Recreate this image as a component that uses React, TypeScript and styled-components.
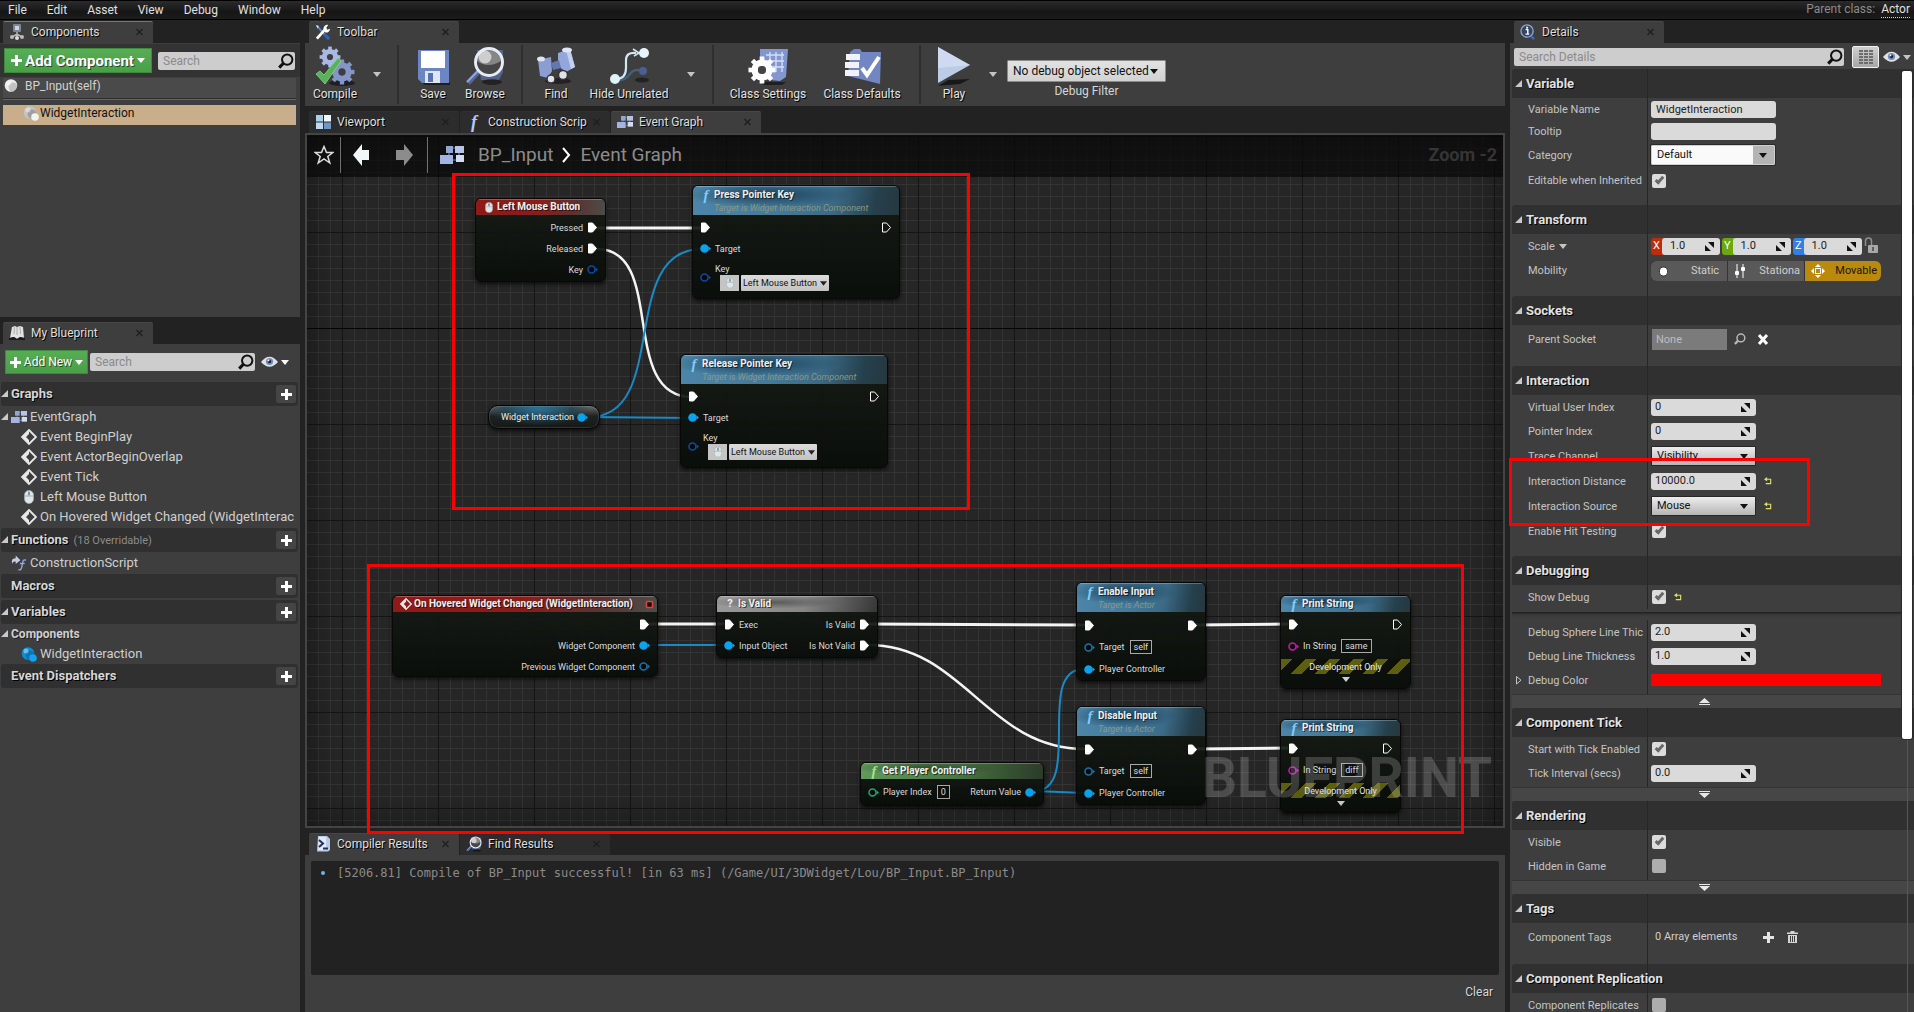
import React from "react";
import styled, { createGlobalStyle, css } from "styled-components";

const sans = `Roboto, "Liberation Sans", sans-serif`;
const mono = `"DejaVu Sans Mono", "Liberation Mono", monospace`;

const Global = createGlobalStyle`
  *, *::before, *::after { box-sizing: border-box; }
  html, body { margin: 0; height: 100%; background: #222; }
  body { font: 12px/16px ${sans}; color: #d6d6d6; overflow: hidden; }
  button, input, select { font: inherit; color: inherit; margin: 0; }
  button { padding: 0; border: 0; background: none; cursor: pointer; }
  svg { display: block; flex: none; }
`;

/* ---------- shell ---------- */

const Editor = styled.div`
  position: relative;
  display: flex;
  flex-direction: column;
  height: 100vh;
  min-height: 600px;
  overflow: hidden;
`;

const MenuBar = styled.header`
  flex: none;
  display: flex;
  align-items: center;
  justify-content: space-between;
  height: 20px;
  padding: 0 4px 0 8px;
  background: linear-gradient(#2b2b2b, #161616 60%, #1c1c1c);
  border-top: 1px solid #000;
  border-bottom: 1px solid #000;
`;

const MenuItems = styled.nav`
  display: flex;
  gap: 20px;
  color: #e0e0e0;
`;

const ParentClass = styled.div`
  display: flex;
  gap: 6px;
  color: #8c8c8c;
  line-height: 15px;

  a {
    color: #e0e0e0;
    text-decoration: none;
    border-bottom: 1px dotted #cfcfcf;
  }
`;

const Workspace = styled.main`
  flex: 1;
  min-height: 0;
  display: grid;
  grid-template-columns: 300px minmax(0, 1fr) 404px;
  column-gap: 5px;
  padding-top: 1px;
`;

const Column = styled.div`
  display: flex;
  flex-direction: column;
  min-width: 0;
  min-height: 0;
`;

const Dock = styled.section<{ $height?: number }>`
  display: flex;
  flex-direction: column;
  min-height: 0;
  ${(p) => (p.$height ? `flex: none; height: ${p.$height}px;` : "flex: 1;")}
`;

const TabStrip = styled.div<{ $inset: number }>`
  flex: none;
  display: flex;
  gap: 1px;
  height: 22px;
  padding-left: ${(p) => p.$inset}px;
`;

const Tab = styled.div<{ $active?: boolean; $accent?: boolean }>`
  display: flex;
  align-items: center;
  gap: 6px;
  width: 150px;
  padding: 0 10px 2px 6px;
  background: ${(p) => (p.$active ? "#3e3e3e" : "#2c2c2c")};
  border-top: 1px solid ${(p) => (p.$accent ? "#8a7a2c" : p.$active ? "#474747" : "#303030")};
  border-radius: 2px 2px 0 0;
  color: #dedede;
  text-shadow: 1px 1px 0 #000;
  white-space: nowrap;
`;

const TabIcon = styled.span`
  display: grid;
  place-items: center;
  width: 16px;
`;

const TabTitle = styled.span`
  flex: 1;
`;

const CloseButton = styled.button`
  width: 7px;
  height: 12px;
  color: #1d1d1d;
`;

const PanelBody = styled.div`
  flex: 1;
  min-height: 0;
  display: flex;
  flex-direction: column;
  background: #3e3e3e;
`;

/* ---------- shared controls ---------- */

const SearchWrap = styled.label`
  flex: 1;
  min-width: 0;
  display: flex;
  align-items: center;
  height: 18px;
  padding: 0 1px 0 5px;
  background: #cdcdcd;
  border-radius: 2px;

  input {
    flex: 1;
    min-width: 0;
    padding: 0;
    border: 0;
    outline: 0;
    background: transparent;
    color: #222;
  }
  input::placeholder { color: #8b8b8b; opacity: 1; }
`;

const GreenButton = styled.button<{ $large?: boolean }>`
  flex: none;
  display: flex;
  align-items: center;
  justify-content: center;
  gap: 3px;
  width: ${(p) => (p.$large ? 148 : 83)}px;
  height: ${(p) => (p.$large ? 25 : 24)}px;
  background: linear-gradient(#56ad53, #4aa049);
  border: 1px solid #3d8a3c;
  color: #fff;
  font-size: ${(p) => (p.$large ? 15 : 12)}px;
  font-weight: ${(p) => (p.$large ? 700 : 400)};
  text-shadow: 1px 1px 0 #2a4a2a;
  white-space: nowrap;
`;

const IconButton = styled.button`
  flex: none;
  display: flex;
  align-items: center;
  gap: 3px;
`;

/* ---------- icons ---------- */

const Caret = ({ w = 8, c = "#fff" }: { w?: number; c?: string }) => (
  <svg width={w} height={5} viewBox="0 0 8 5"><path d="M0 0h8L4 5z" fill={c} /></svg>
);

const Cross = () => (
  <svg width="7" height="12" viewBox="0 0 7 12"><path d="M.5 3l6 6M6.5 3l-6 6" stroke="currentColor" strokeWidth="1.2" /></svg>
);

const PlusIcon = ({ s = 11, c = "#fff" }: { s?: number; c?: string }) => (
  <svg width={s} height={s} viewBox="0 0 11 11"><path d="M4 0h3v4h4v3H7v4H4V7H0V4h4z" fill={c} /></svg>
);

const SearchIcon = ({ c = "#111", s = 16 }: { c?: string; s?: number }) => (
  <svg width={s} height={s} viewBox="0 0 16 16">
    <circle cx="9.2" cy="6.6" r="5.2" fill="none" stroke={c} strokeWidth="2" />
    <path d="M5.4 10.2L1.2 14.6" stroke={c} strokeWidth="3" />
  </svg>
);

const EyeIcon = () => (
  <svg width="17" height="12" viewBox="0 0 17 12">
    <path d="M0 6Q8.500-4.500 17 6Q8.500 15.500 0 6z" fill="#dfe3e8" />
    <circle cx="8.500" cy="5.500" r="3.600" fill="#6f8db8" />
    <circle cx="8.500" cy="5.500" r="1.700" fill="#1a2233" />
    <circle cx="7.500" cy="4.400" r=".9" fill="#fff" />
  </svg>
);

const GraphIcon = ({ s = 16 }: { s?: number }) => (
  <svg width={s} height={s} viewBox="0 0 24 24">
    <path d="M12 5h5M9 9v4M12 17h5M19 9v5" stroke="#7582a8" strokeWidth="1.200" fill="none" />
    <rect x="6" y="3" width="7" height="7" fill="#93a4d6" />
    <rect x="15" y="3" width="9" height="7" fill="#b7c4e8" />
    <rect x="0" y="12" width="13" height="9" fill="#a3b4e2" />
    <rect x="16" y="12" width="8" height="7" fill="#d5dcf2" />
  </svg>
);

const EventIcon = ({ s = 16, c = "#e8e8e8" }: { s?: number; c?: string }) => (
  <svg width={s} height={s} viewBox="0 0 16 16">
    <path d="M8 1L15 8L8 15L1 8z" fill="none" stroke={c} strokeWidth="1.800" />
    <path d="M8 1L1 8L8 15V11L5 8L8 5z" fill={c} />
  </svg>
);

const MouseIcon = ({ w = 10, h = 14 }: { w?: number; h?: number }) => (
  <svg width={w} height={h} viewBox="0 0 10 14">
    <rect x=".5" y=".5" width="9" height="13" rx="4.500" fill="#dde6e8" stroke="#9fb0b4" strokeWidth=".7" />
    <path d="M.5 6h9M5 .5V6" stroke="#8c9a9e" strokeWidth=".7" />
    <rect x="4" y="2" width="2" height="3" rx="1" fill="#7c8b90" />
  </svg>
);

const SphereIcon = ({ c = "#ededed", dot = false }: { c?: string; dot?: boolean }) => (
  <svg width="16" height="16" viewBox="0 0 16 16">
    <circle cx="7" cy="7.500" r="6.300" fill={c} />
    <circle cx="9" cy="9" r="4.500" fill="#000" opacity=".18" />
    <circle cx="5" cy="5" r="2.500" fill="#fff" opacity=".4" />
    {dot && <circle cx="12" cy="12" r="3.800" fill={c === "#0b8fdb" ? "#14a2f0" : "#f4f4f4"} />}
  </svg>
);

const Twisty = styled.span`
  flex: none;
  width: 0;
  height: 0;
  border-left: 7px solid transparent;
  border-bottom: 7px solid #c9c9c9;
`;

const FGlyph = styled.span<{ $size: number; $color: string }>`
  font: italic 700 ${(p) => p.$size}px/14px "Liberation Serif", serif;
  color: ${(p) => p.$color};
  text-shadow: none;
`;

const ComponentsIcon = () => (
  <svg width="16" height="16" viewBox="0 0 16 16">
    <rect x="4" y="0" width="8" height="8" rx="1" fill="#7c8796" /><rect x="6" y="2" width="4" height="4" fill="#c9d5e6" />
    <path d="M8 8v4M3 13l5-3 5 3" stroke="#b5b5b5" fill="none" strokeWidth="1.500" />
    <circle cx="3" cy="13" r="2" fill="#bbb" /><circle cx="8" cy="14" r="2" fill="#ddd" /><circle cx="13" cy="13" r="2" fill="#bbb" />
  </svg>
);

const BookIcon = () => (
  <svg width="16" height="16" viewBox="0 0 16 16">
    <path d="M3 2l3-1 2 1 3-1 3 1 1 11-4-1-3 2-3-2-4 1z" fill="#e2e2e2" />
    <path d="M8 2v8M5.500 2L5 9M11 2l.5 7" stroke="#9d9d9d" strokeWidth=".8" />
    <path d="M0 13l5-1 3 2 3-2 5 1v2H0z" fill="#1b1b1b" />
  </svg>
);

const WrenchIcon = () => (
  <svg width="16" height="16" viewBox="0 0 17 17">
    <path d="M2 2l9 10" stroke="#5d83c4" strokeWidth="2" /><path d="M10 11l5 5" stroke="#2f62b8" strokeWidth="3.500" />
    <path d="M2 15.500L10.500 6" stroke="#fff" strokeWidth="3" />
    <path d="M9 5a4 4 0 015-4l-2 3 1 2 3-1a4 4 0 01-5 4z" fill="#fff" />
    <path d="M1 1l3 1-1 3z" fill="#dfe6f3" />
  </svg>
);

const ViewportIcon = () => (
  <svg width="15" height="16" viewBox="0 0 15 16">
    <rect x="0" y="1" width="7" height="6.500" fill="#a7d0ea" /><rect x="8" y="1" width="7" height="6.500" fill="#f3f7fb" />
    <rect x="0" y="8.500" width="7" height="6.500" fill="#c3d7f0" /><rect x="8" y="8.500" width="7" height="6.500" fill="#6f96c4" />
  </svg>
);

const InfoIcon = () => (
  <svg width="16" height="16" viewBox="0 0 17 17">
    <path d="M10 11l5 5" stroke="#3e68b4" strokeWidth="2.500" />
    <circle cx="7.500" cy="7.500" r="6.500" fill="#35445f" stroke="#8ba6d6" strokeWidth="1.400" />
    <path d="M6 6h2.300v4.500M5.800 10.800h4" stroke="#fff" strokeWidth="1.500" fill="none" /><rect x="6.600" y="2.900" width="2" height="2" fill="#fff" />
  </svg>
);

const ScriptIcon = () => (
  <svg width="14" height="16" viewBox="0 0 14 16">
    <path d="M2 0h9l3 3v11l-2 1.500H1z" fill="#b9cbe8" /><path d="M3 1h7v13H2z" fill="#e0eaf8" />
    <path d="M3 4l4 3.500L3 11M7 12.500h5" stroke="#25304f" strokeWidth="2" fill="none" />
  </svg>
);

const LensIcon = ({ s = 16 }: { s?: number }) => (
  <svg width={s} height={s} viewBox="0 0 40 40">
    <path d="M12 4h26v22l-4 8H16z" fill="#5c74ae" opacity=".7" />
    <ellipse cx="27" cy="36" rx="10" ry="3" fill="#000" opacity=".45" />
    <path d="M14 25L3 37" stroke="#54689c" strokeWidth="5" /><path d="M13 25L2 36" stroke="#93a8d8" strokeWidth="2" />
    <circle cx="24" cy="16" r="13.500" fill="#858585" stroke="#e6ebf5" strokeWidth="3" />
    <path d="M12 15q11 8 24 0a12 12 0 01-24 2z" fill="#1c1c1c" opacity=".6" />
    <circle cx="20" cy="11" r="6.500" fill="#fff" opacity=".6" />
  </svg>
);

const Gear = ({ cx, cy, r, c }: { cx: number; cy: number; r: number; c: string }) => (
  <g transform={`translate(${cx} ${cy})`}>
    <circle r={r * 0.56} fill="none" stroke={c} strokeWidth={r * 0.5} />
    {[0, 45, 90, 135, 180, 225, 270, 315].map((a) => (
      <rect key={a} x={-r * 0.18} y={-r * 1.04} width={r * 0.36} height={r * 0.4} fill={c} transform={`rotate(${a})`} />
    ))}
  </g>
);

const CompileIcon = () => (
  <svg width="40" height="40" viewBox="0 0 40 40">
    <ellipse cx="27" cy="37" rx="13" ry="3" fill="#000" opacity=".5" />
    <Gear cx={15} cy={11} r={10} c="#a9b9e4" /><Gear cx={27} cy={26} r={12} c="#8496c8" />
    <path d="M1 28l4-3 4 4L23 12l3 3L10 38z" fill="#57b25a" stroke="#8fd48c" strokeWidth=".8" />
  </svg>
);

const SaveIcon = () => (
  <svg width="40" height="40" viewBox="0 0 40 40">
    <path d="M8 36h29v3H12z" fill="#000" opacity=".5" />
    <path d="M5 4h31v33H9l-4-4z" fill="#6c86c4" /><rect x="8" y="5" width="24" height="17" fill="#fff" />
    <rect x="12" y="25" width="15" height="12" fill="#dfe5f2" /><rect x="15" y="27" width="5" height="9" fill="#5871b0" />
  </svg>
);

const FindIcon = () => (
  <svg width="40" height="40" viewBox="0 0 40 40">
    <ellipse cx="22" cy="35" rx="13" ry="3" fill="#000" opacity=".45" />
    <path d="M2 14l13-3 1 14-4 7-8-2z" fill="#8a9ed4" /><path d="M22 7l12-4 5 18-9 5-8-6z" fill="#93a7dc" />
    <path d="M30 4l4-1 5 18-4 2z" fill="#c4d0ee" /><path d="M15 17l8-3 2 8-8 2z" fill="#6478b0" />
    <ellipse cx="5" cy="13" rx="4" ry="2.500" fill="#dfe5f4" /><ellipse cx="31" cy="4" rx="5" ry="2.500" fill="#dfe5f4" />
    <circle cx="15" cy="33" r="4" fill="#dfe3e8" stroke="#333" strokeWidth="1.500" /><circle cx="27" cy="29" r="4.500" fill="#dfe3e8" stroke="#333" strokeWidth="1.500" />
  </svg>
);

const HideIcon = () => (
  <svg width="42" height="40" viewBox="0 0 42 40">
    <path d="M10 34Q18 34 22 28T35 25" stroke="#3f6078" strokeWidth="2.500" fill="none" /><circle cx="35" cy="25" r="4" fill="#4b5f94" />
    <path d="M8 33Q18 33 18 22V14Q18 6 28 7" stroke="#cfe7f2" strokeWidth="2.200" fill="none" /><path d="M25 3l6 4-5 3" stroke="#cfe7f2" strokeWidth="1.600" fill="none" />
    <ellipse cx="34" cy="34" rx="7" ry="2.500" fill="#111" opacity=".6" />
    <circle cx="7" cy="33" r="5" fill="#dff3fb" /><circle cx="36" cy="7" r="5" fill="#e8f4fb" />
  </svg>
);

const SettingsIcon = () => (
  <svg width="40" height="40" viewBox="0 0 40 40">
    <path d="M12 36h26l-4 3H16z" fill="#000" opacity=".5" />
    <path d="M12 3h28l-2 28-6 4-20-2z" fill="#8296cf" />
    <path d="M18 9h18M18 15h18M18 21h18M22 6v20M28 6v20M34 6v20" stroke="#d7dff4" strokeWidth="1.300" />
    <Gear cx={14} cy={24} r={13} c="#fff" /><circle cx="14" cy="24" r="4" fill="#444" />
  </svg>
);

const DefaultsIcon = () => (
  <svg width="40" height="40" viewBox="0 0 40 40">
    <path d="M8 6l4-3h6l2 3h19l-1 32-32-8z" fill="#7186c2" />
    <path d="M4 8h14v6H4zM3 16h14v6H3zM3 24h14v6H3z" fill="#f1f3f8" />
    <path d="M20 22l5 7L37 11" stroke="#fff" strokeWidth="4" fill="none" />
  </svg>
);

const PlayIcon = () => (
  <svg width="36" height="40" viewBox="0 0 36 40">
    <path d="M2 40l10-6 22-1-10 5z" fill="#000" opacity=".6" /><path d="M2 1l32 18L2 37z" fill="#bccbe6" /><path d="M2 1l32 18-32 3z" fill="#dbe5f5" opacity=".6" />
  </svg>
);

const StarIcon = () => (
  <svg width="20" height="20" viewBox="0 0 20 20"><path d="M10 1.500l2.500 6h6.300l-5 4 2 6.500L10 14l-5.800 4 2-6.500-5-4h6.300z" fill="none" stroke="#dcdcdc" strokeWidth="1.500" /></svg>
);

const ArrowIcon = ({ dir, c }: { dir: "l" | "r"; c: string }) => (
  <svg width="17" height="22" viewBox="0 0 17 22">
    <path d={dir === "l" ? "M0 11L9 0v6h7v10H9v6z" : "M17 11L8 0v6H0v10h8v6z"} fill={c} />
  </svg>
);

const SpinGlyph = () => (
  <svg width="9" height="9" viewBox="0 0 9 9"><path d="M3 0h6v6zM0 3v6h6z" fill="#111" /></svg>
);

const ResetGlyph = () => (
  <svg width="8" height="8" viewBox="0 0 9 9"><path d="M1 2.500h6.500v5H2" stroke="#dede6a" strokeWidth="1.300" fill="none" /><path d="M0 2.500L3.500 0v5z" fill="#dede6a" /></svg>
);

const LockIcon = () => (
  <svg width="14" height="18" viewBox="0 0 14 18">
    <path d="M1.500 9V4a3 3 0 016 0v5" stroke="#8f8f8f" strokeWidth="1.500" fill="none" /><rect x="4" y="8" width="10" height="8" rx="1" fill="#a8a8a8" /><path d="M9 10v4" stroke="#444" strokeWidth="1.500" />
  </svg>
);

const GridIcon = () => (
  <svg width="14" height="16" viewBox="0 0 14 16">
    {[0, 3, 6, 9, 12].map((y) => [0, 5, 10].map((x) => <rect key={`${x}-${y}`} x={x} y={y + 1} width="4" height="2" fill="#6d6d6d" />))}
  </svg>
);

const TrashIcon = () => (
  <svg width="11" height="12" viewBox="0 0 11 12"><path d="M0 1.500h3.500V0h4v1.500H11V3H0z" fill="#d5d5d5" /><path d="M1 4h9v8H1z" fill="#d5d5d5" /><path d="M3.500 5v6M5.500 5v6M7.500 5v6" stroke="#3e3e3e" /></svg>
);

const Chevron = () => (
  <svg width="9" height="16" viewBox="0 0 9 16"><path d="M1 1l6 7-6 7" stroke="#fff" strokeWidth="2" fill="none" /></svg>
);

/* ---------- left column ---------- */

const ComponentsHead = styled.div`
  display: flex;
  align-items: center;
  gap: 6px;
  height: 33px;
  padding: 0 5px 0 4px;
  margin-top: 1px;
  background: #333;
`;

const ComponentList = styled.div`
  display: flex;
  flex-direction: column;
  padding: 1px 4px 0 3px;
`;

const ComponentRow = styled.button<{ $selected?: boolean }>`
  display: flex;
  align-items: center;
  gap: ${(p) => (p.$selected ? 1 : 5)}px;
  height: 20px;
  padding: 0 0 4px ${(p) => (p.$selected ? 20 : 1)}px;
  background: ${(p) => (p.$selected ? "#c9ae8b" : "#4a4a4a")};
  color: ${(p) => (p.$selected ? "#111" : "#d2d2d2")};
`;

const ListRule = styled.hr`
  width: 100%;
  height: 7px;
  margin: 0;
  border: 0;
  border-top: 1px solid #2c2c2c;
  background: linear-gradient(#666, #666) top / 100% 1px no-repeat;
`;

const BlueprintStrip = styled(TabStrip)`
  margin-top: 5px;
`;

const BlueprintHead = styled.div`
  display: flex;
  align-items: center;
  gap: 2px;
  padding: 6px 11px 8px 5px;

  ${IconButton} { margin-left: 4px; }
`;

const TreeHeader = styled.div`
  display: flex;
  align-items: center;
  gap: 3px;
  height: 24px;
  margin: 0 2px 0 1px;
  padding: 0 2px 0 0;
  background: #303030;
  border-radius: 3px;
  font-size: 13px;
  font-weight: 700;
  text-shadow: 1px 1px 0 #000;

  small { flex: 1; margin-left: 2px; padding-top: 2px; font-size: 11px; font-weight: 400; color: #8c8c8c; text-shadow: none; }
`;

const TwistySlot = styled.span`
  flex: none;
  display: flex;
  width: 7px;
  padding-bottom: 2px;
`;

const AddButton = styled.button`
  display: grid;
  place-items: center;
  width: 20px;
  height: 18px;
  border-radius: 2px;
  background: #454545;
`;

const TreeGroup = styled.div`
  padding: 1px 0;
`;

const TreeRow = styled.div<{ $indent?: number }>`
  display: flex;
  align-items: center;
  gap: 3px;
  height: 20px;
  padding-left: ${(p) => p.$indent ?? 1}px;
  color: #cfcfcf;
  font-size: 13px;
  white-space: nowrap;
`;

const IconSlot = styled.span`
  display: grid;
  place-items: center;
  width: 16px;
`;

const SubHead = styled.b`
  text-shadow: 1px 1px 0 #222;
  font-size: 12px;
`;

const TreeGap = styled.div`
  height: 2px;
`;

const TreeHead = ({ title, note, open = true }: { title: string; note?: string; open?: boolean }) => (
  <TreeHeader>
    <TwistySlot>{open && <Twisty />}</TwistySlot>
    <span>{title}</span>
    <small>{note}</small>
    <AddButton aria-label={`Add to ${title}`}><PlusIcon /></AddButton>
  </TreeHeader>
);

const TabItem = ({ icon, title, active, accent }: { icon: React.ReactNode; title: string; active?: boolean; accent?: boolean }) => (
  <Tab $active={active} $accent={accent}>
    <TabIcon>{icon}</TabIcon>
    <TabTitle>{title}</TabTitle>
    <CloseButton aria-label={`Close ${title}`}><Cross /></CloseButton>
  </Tab>
);

const LeftColumn = () => (
  <Column>
    <Dock $height={296}>
      <TabStrip $inset={3}><TabItem icon={<ComponentsIcon />} title="Components" active accent /></TabStrip>
      <PanelBody>
        <ComponentsHead>
          <GreenButton $large><PlusIcon />Add Component<Caret /></GreenButton>
          <SearchWrap><input aria-label="Search components" placeholder="Search" /><SearchIcon /></SearchWrap>
        </ComponentsHead>
        <ComponentList>
          <ComponentRow><SphereIcon />BP_Input(self)</ComponentRow>
          <ListRule />
          <ComponentRow $selected><SphereIcon c="#c4c4c4" dot />WidgetInteraction</ComponentRow>
        </ComponentList>
      </PanelBody>
    </Dock>
    <Dock>
      <BlueprintStrip $inset={3}>
        <TabItem icon={<BookIcon />} title="My Blueprint" active />
      </BlueprintStrip>
      <PanelBody>
        <BlueprintHead>
          <GreenButton><PlusIcon />Add New<Caret /></GreenButton>
          <SearchWrap><input aria-label="Search blueprint" placeholder="Search" /><SearchIcon /></SearchWrap>
          <IconButton aria-label="View options"><EyeIcon /><Caret /></IconButton>
        </BlueprintHead>
        <TreeHead title="Graphs" />
        <TreeGroup>
          <TreeRow><TwistySlot><Twisty /></TwistySlot><IconSlot><GraphIcon /></IconSlot>EventGraph</TreeRow>
          <TreeRow $indent={21}><IconSlot><EventIcon /></IconSlot>Event BeginPlay</TreeRow>
          <TreeRow $indent={21}><IconSlot><EventIcon /></IconSlot>Event ActorBeginOverlap</TreeRow>
          <TreeRow $indent={21}><IconSlot><EventIcon /></IconSlot>Event Tick</TreeRow>
          <TreeRow $indent={21}><IconSlot><MouseIcon /></IconSlot>Left Mouse Button</TreeRow>
          <TreeRow $indent={21}><IconSlot><EventIcon /></IconSlot>On Hovered Widget Changed (WidgetInterac</TreeRow>
        </TreeGroup>
        <TreeHead title="Functions" note="(18 Overridable)" />
        <TreeGroup>
          <TreeRow $indent={11}>
            <IconSlot>
              <svg width="16" height="16" viewBox="0 0 17 16">
                <path d="M1 9V6q0-3 4-3V0l5 5-5 4V6.500Q2 6 1 9z" fill="#c3cce0" />
                <path d="M8 15q3 1 3.500-3l1-5q.5-3 3.500-2M9.500 8.500h5" stroke="#8fa6dc" strokeWidth="1.500" fill="none" />
              </svg>
            </IconSlot>
            ConstructionScript
          </TreeRow>
        </TreeGroup>
        <TreeHead title="Macros" open={false} />
        <TreeGap />
        <TreeHead title="Variables" />
        <TreeRow><TwistySlot><Twisty /></TwistySlot><SubHead>Components</SubHead></TreeRow>
        <TreeRow $indent={21}><IconSlot><SphereIcon c="#0b8fdb" dot /></IconSlot>WidgetInteraction</TreeRow>
        <TreeHead title="Event Dispatchers" open={false} />
      </PanelBody>
    </Dock>
  </Column>
);

/* ---------- toolbar ---------- */

const ToolbarBody = styled.div`
  flex: none;
  display: flex;
  align-items: center;
  height: 63px;
  background: #3e3e3e;
  overflow: hidden;
`;

const Tool = styled.button<{ $w: number }>`
  flex: none;
  display: flex;
  flex-direction: column;
  align-items: center;
  width: ${(p) => p.$w}px;
  padding-bottom: 1px;
  color: #e2e2e2;
  text-shadow: 1px 1px 0 #000;
  white-space: nowrap;
`;

const DropArrow = styled.button<{ $w: number }>`
  flex: none;
  display: grid;
  place-items: center;
  width: ${(p) => p.$w}px;
  height: 40px;
`;

const ToolDivider = styled.div<{ $gap: number }>`
  flex: none;
  width: 2px;
  height: 59px;
  margin: 0 4px 0 ${(p) => p.$gap}px;
  background: #2e2e2e;
`;

const FilterGroup = styled.label`
  display: flex;
  flex-direction: column;
  align-items: center;
  gap: 1px;
  margin-left: 4px;
  padding-top: 10px;
`;

const SelectBox = styled.span<{ $w: number; $h: number; $plain?: boolean }>`
  display: flex;
  position: relative;
  width: ${(p) => p.$w}px;
  height: ${(p) => p.$h}px;
  color: #111;

  select {
    appearance: none;
    width: 100%;
    height: 100%;
    padding: 0 3px 0 5px;
    border: 1px solid ${(p) => (p.$plain ? "#8a8a8a" : "#262626")};
    border-radius: 1px;
    background: linear-gradient(#ededed, #b5b5b5);
    color: inherit;
    ${(p) => p.$plain && css`background: linear-gradient(#e2e2e2, #d2d2d2);`}
  }
  svg { position: absolute; right: 8px; top: calc(50% - 2px); pointer-events: none; }
`;

const Toolbar = () => (
  <>
    <TabStrip $inset={4}><TabItem icon={<WrenchIcon />} title="Toolbar" active /></TabStrip>
    <ToolbarBody>
      <Tool $w={60}><CompileIcon />Compile</Tool>
      <DropArrow $w={24} aria-label="Compile options"><Caret c="#c4c4c4" /></DropArrow>
      <ToolDivider $gap={8} />
      <Tool $w={60}><SaveIcon />Save</Tool>
      <Tool $w={44}><LensIcon s={40} />Browse</Tool>
      <ToolDivider $gap={14} />
      <Tool $w={58}><FindIcon />Find</Tool>
      <Tool $w={88}><HideIcon />Hide Unrelated</Tool>
      <DropArrow $w={36} aria-label="Hide unrelated options"><Caret c="#c4c4c4" /></DropArrow>
      <ToolDivider $gap={3} />
      <Tool $w={100}><SettingsIcon />Class Settings</Tool>
      <Tool $w={88}><DefaultsIcon />Class Defaults</Tool>
      <ToolDivider $gap={13} />
      <Tool $w={58}><PlayIcon />Play</Tool>
      <DropArrow $w={20} aria-label="Play options"><Caret c="#c4c4c4" /></DropArrow>
      <FilterGroup>
        <SelectBox $w={159} $h={22} $plain>
          <select defaultValue="none"><option value="none">No debug object selected</option></select>
          <Caret c="#111" />
        </SelectBox>
        Debug Filter
      </FilterGroup>
    </ToolbarBody>
  </>
);

/* ---------- graph ---------- */

const GraphTabs = styled(TabStrip)`
  margin-top: 5px;
`;

const GraphFrame = styled.div`
  position: relative;
  flex: 1;
  min-height: 0;
  border: 2px solid #444;
  overflow: hidden;
  background-color: #262626;
  background-image:
    linear-gradient(#050505, #050505),
    linear-gradient(90deg, #151515 1px, transparent 1px),
    linear-gradient(#151515 1px, transparent 1px),
    linear-gradient(90deg, #343434 1px, transparent 1px),
    linear-gradient(#343434 1px, transparent 1px);
  background-repeat: no-repeat, repeat, repeat, repeat, repeat;
  background-position: 0 193px, -61px 0, 0 1px, -1px 0, 0 1px;
  background-size: 100% 1px, 96px 96px, 96px 96px, 12px 12px, 12px 12px;

  &::after {
    content: "";
    position: absolute;
    inset: 0;
    pointer-events: none;
    box-shadow: inset 0 0 36px rgba(0, 0, 0, 0.45);
  }
`;

const GraphTitle = styled.div`
  position: absolute;
  z-index: 2;
  inset: 0 0 auto 0;
  display: flex;
  align-items: center;
  height: 42px;
  padding: 0 6px 2px 7px;
  background: rgba(8, 8, 8, 0.72);
  color: #8c8c8c;
  font-size: 19px;
`;

const TitleTools = styled.div<{ $w: number; $pad: string }>`
  display: flex;
  align-items: center;
  justify-content: space-between;
  width: ${(p) => p.$w}px;
  height: 36px;
  padding: ${(p) => p.$pad};
  border-right: 1px solid #707070;
`;

const Crumbs = styled.div`
  flex: 1;
  display: flex;
  align-items: center;
  gap: 9px;
  padding-left: 12px;

  svg:first-child { margin-right: 5px; }
`;

const ZoomLabel = styled.span`
  font-size: 18px;
  font-weight: 700;
  color: #353535;
`;

const Wires = styled.svg`
  position: absolute;
  inset: 0;
  width: 100%;
  height: 100%;
`;

const Watermark = styled.div`
  position: absolute;
  right: 11px;
  bottom: 18px;
  z-index: 2;
  font-size: 55px;
  line-height: 60px;
  font-weight: 700;
  color: rgba(200, 200, 200, 0.24);
  pointer-events: none;
`;

type Tone = "event" | "func" | "pure" | "macro";
const tones: Record<Tone, string> = {
  event: "linear-gradient(90deg, #8f1a17, #8a1d1a 50%, #5a3431 78%, #4c4c49)",
  func: "radial-gradient(ellipse at 36% 30%, rgba(20, 52, 74, 0.85), transparent 45%), linear-gradient(100deg, #4d86aa, #43799b 45%, #3b6a86 68%, #25404d 88%, #25383f)",
  pure: "radial-gradient(ellipse at 36% 30%, rgba(40, 66, 38, 0.8), transparent 45%), linear-gradient(100deg, #629a5b, #4c7a46 50%, #3a5935 75%, #2c3a2a)",
  macro: "radial-gradient(ellipse at 36% 40%, rgba(70, 70, 70, 0.7), transparent 45%), linear-gradient(105deg, #9a9a9a, #868686 55%, #5d5d5d 78%, #363636)",
};

const NodeBox = styled.article<{ $x: number; $y: number; $w: number; $h: number }>`
  position: absolute;
  left: ${(p) => p.$x - 307}px;
  top: ${(p) => p.$y - 135}px;
  width: ${(p) => p.$w}px;
  height: ${(p) => p.$h}px;
  border: 1px solid #080808;
  border-radius: 6px;
  background: linear-gradient(rgba(20, 26, 20, 0.9), rgba(9, 13, 9, 0.94));
  box-shadow: 0 2px 4px rgba(0, 0, 0, 0.7);
  font-size: 9px;
  line-height: 12px;
  color: #dcdcdc;
  overflow: hidden;
`;

const NodeHead = styled.header<{ $tone: Tone; $tall?: boolean }>`
  display: grid;
  grid-template-columns: 12px 1fr auto;
  column-gap: 2px;
  align-items: center;
  align-content: start;
  height: ${(p) => (p.$tall ? 29 : 16)}px;
  padding: ${(p) => (p.$tall ? 2 : 1)}px 3px 0 7px;
  background: ${(p) => tones[p.$tone]};
  box-shadow: inset 0 1px 0 rgba(255, 255, 255, 0.25);

  h3 { margin: 0; font-size: 10px; line-height: 14px; font-weight: 700; color: #f0f0f0; white-space: nowrap; text-shadow: 1px 1px 0 rgba(0, 0, 0, 0.6); }
  p { grid-column: 2; margin: 0; font-style: italic; color: #8b9880; white-space: nowrap; }
  > span, > svg, > b { justify-self: center; }
  > b { font-size: 11px; color: #f0f0f0; }
`;

const NodeRows = styled.div`
  padding: 2px 7px 0 7px;
`;

const NodeRow = styled.div<{ $h?: number }>`
  display: flex;
  align-items: center;
  justify-content: space-between;
  height: ${(p) => p.$h ?? 21}px;
`;

const PinLabel = styled.div<{ $out?: boolean }>`
  display: flex;
  align-items: center;
  gap: 4px;
  margin-left: ${(p) => (p.$out ? "auto" : "0")};
  white-space: nowrap;
`;

const ValueBox = styled.span`
  display: block;
  margin-left: 1px;
  padding: 0 3px;
  border: 1px solid #a9a9a9;
`;

const ValueInput = styled.input<{ $w: number }>`
  width: ${(p) => p.$w}px;
  height: 14px;
  margin-left: 1px;
  padding: 0 3px;
  border: 1px solid #a9a9a9;
  background: #0d100d;
`;

const Exec = ({ on }: { on?: boolean }) => (
  <svg width="11" height="11" viewBox="0 0 11 11">
    <path d="M1.500 1h4l4 4.500-4 4.500h-4z" fill={on ? "#fff" : "none"} stroke="#fff" strokeLinejoin="round" />
  </svg>
);

const Data = ({ c, on }: { c: string; on?: boolean }) => (
  <svg width="11" height="11" viewBox="0 0 11 11">
    <circle cx="4.500" cy="5.500" r="3.500" fill={on ? c : "#050705"} stroke={c} strokeWidth="1.600" />
    <path d="M8.500 3.300L11 5.500 8.500 7.700z" fill={c} />
  </svg>
);

const OBJ = "#0ba3ee";
const OBJ_OFF = "#1173ab";

const KeyPin = styled.div`
  display: grid;
  grid-template-columns: 11px 1fr;
  column-gap: 4px;
  align-items: center;
  padding-top: 4px;
`;

const KeyValue = styled.div`
  display: flex;
  gap: 2px;
  margin-left: 5px;
`;

const MouseTile = styled.button`
  display: grid;
  place-items: center;
  width: 19px;
  height: 16px;
  background: #c4c4c4;
`;

const KeySelect = styled(SelectBox)`
  select { padding: 0 2px; border: 0; background: linear-gradient(#dcdcdc, #c2c2c2); }
  svg { right: 2px; }
`;

const Hazard = styled.div`
  display: grid;
  place-items: center;
  height: 15px;
  margin-top: 2px;
  background: repeating-linear-gradient(135deg, #5e5e10 0 8px, #0c0f0c 8px 17px);
  color: #e6e6e6;
`;

const Expand = styled.button`
  display: grid;
  place-items: center;
  width: 100%;
  height: 10px;
`;

const PillNode = styled.article<{ $x: number; $y: number }>`
  position: absolute;
  left: ${(p) => p.$x - 307}px;
  top: ${(p) => p.$y - 135}px;
  display: flex;
  align-items: center;
  justify-content: flex-end;
  gap: 3px;
  width: 112px;
  height: 24px;
  padding-right: 11px;
  border: 1px solid #050505;
  border-radius: 10px;
  background: radial-gradient(ellipse at 45% 10%, #2a7296, rgba(28, 66, 84, 0.7) 40%, transparent 62%), linear-gradient(#6b6b6b, #1f2321 45%, #151816);
  box-shadow: inset 0 0 0 1px rgba(255, 255, 255, 0.12), 0 2px 4px rgba(0, 0, 0, 0.7);
  font-size: 9px;
  line-height: 12px;
  color: #ececec;
`;

interface NodeProps { x: number; y: number; w: number; h: number; tone: Tone; icon: React.ReactNode; title: string; sub?: string; badge?: boolean; children: React.ReactNode }

const GraphNode = ({ x, y, w, h, tone, icon, title, sub, badge, children }: NodeProps) => (
  <NodeBox $x={x} $y={y} $w={w} $h={h}>
    <NodeHead $tone={tone} $tall={!!sub}>
      {icon}
      <h3>{title}</h3>
      {badge && <svg width="9" height="9" viewBox="0 0 9 9"><rect x="1.500" y="1.500" width="6" height="6" rx="1" fill="#2a0505" stroke="#e0463f" strokeWidth="1.500" /></svg>}
      {sub && <p>{sub}</p>}
    </NodeHead>
    {children}
  </NodeBox>
);

const nodeF = <FGlyph $size={15} $color="#82ccf6">f</FGlyph>;

const PointerNode = ({ x, y, title }: { x: number; y: number; title: string }) => (
  <GraphNode x={x} y={y} w={208} h={114} tone="func" icon={nodeF} title={title} sub="Target is Widget Interaction Component">
    <NodeRows>
      <NodeRow><PinLabel><Exec on /></PinLabel><PinLabel $out><Exec /></PinLabel></NodeRow>
      <NodeRow><PinLabel><Data c={OBJ} on />Target</PinLabel></NodeRow>
      <KeyPin>
        <Data c="#0b4aa0" />
        <div>
          Key
          <KeyValue>
            <MouseTile aria-label="Listen for key"><MouseIcon w={8} h={12} /></MouseTile>
            <KeySelect $w={88} $h={16}>
              <select aria-label={`${title} key`} defaultValue="l"><option value="l">Left Mouse Button</option></select>
              <Caret w={7} c="#222" />
            </KeySelect>
          </KeyValue>
        </div>
      </KeyPin>
    </NodeRows>
  </GraphNode>
);

const InputNode = ({ y, title }: { y: number; title: string }) => (
  <GraphNode x={1076} y={y} w={130} h={99} tone="func" icon={nodeF} title={title} sub="Target is Actor">
    <NodeRows>
      <NodeRow $h={22}><PinLabel><Exec on /></PinLabel><PinLabel $out><Exec on /></PinLabel></NodeRow>
      <NodeRow $h={22}><PinLabel><Data c={OBJ_OFF} />Target<ValueBox>self</ValueBox></PinLabel></NodeRow>
      <NodeRow $h={22}><PinLabel><Data c={OBJ} on />Player Controller</PinLabel></NodeRow>
    </NodeRows>
  </GraphNode>
);

const PrintNode = ({ y, w, value, boxW }: { y: number; w: number; value: string; boxW: number }) => (
  <GraphNode x={1280} y={y} w={w} h={94} tone="func" icon={nodeF} title="Print String">
    <NodeRows>
      <NodeRow><PinLabel><Exec on /></PinLabel><PinLabel $out><Exec /></PinLabel></NodeRow>
      <NodeRow $h={22}>
        <PinLabel as="label"><Data c="#d010b4" />In String<ValueInput $w={boxW} defaultValue={value} /></PinLabel>
      </NodeRow>
    </NodeRows>
    <Hazard>Development Only</Hazard>
    <Expand aria-label="Show more pins"><Caret c="#cfcfcf" /></Expand>
  </GraphNode>
);

const Graph = () => (
  <GraphFrame>
    <Wires>
      <g transform="translate(-307 -135)" fill="none" stroke="#f4f4f4" strokeWidth="3">
        <path d="M596 228H702M648 624H724M868 624L1085 625M1196 625L1288 624M1196 749L1288 748" />
        <path d="M597 249C667 249 618 397 692 397M868 645C964 645 987 749 1085 749" strokeWidth="2.500" />
      </g>
      <g transform="translate(-307 -135)" fill="none" stroke="#1a8ac4" strokeWidth="2">
        <path d="M589 417C671 417 617 249 702 249M588 417L692 418M647 645H724M1034 791C1084 791 1034 669 1084 669M1034 791L1084 793" />
      </g>
    </Wires>
    <GraphNode x={475} y={198} w={131} h={84} tone="event" icon={<MouseIcon w={8} h={11} />} title="Left Mouse Button">
      <NodeRows>
        <NodeRow><PinLabel $out>Pressed<Exec on /></PinLabel></NodeRow>
        <NodeRow><PinLabel $out>Released<Exec on /></PinLabel></NodeRow>
        <NodeRow><PinLabel $out>Key<Data c="#0b4aa0" /></PinLabel></NodeRow>
      </NodeRows>
    </GraphNode>
    <PointerNode x={692} y={185} title="Press Pointer Key" />
    <PointerNode x={680} y={354} title="Release Pointer Key" />
    <PillNode $x={488} $y={405}>Widget Interaction<Data c={OBJ} on /></PillNode>
    <GraphNode x={392} y={595} w={266} h={82} tone="event" icon={<EventIcon s={12} />} title="On Hovered Widget Changed (WidgetInteraction)" badge>
      <NodeRows>
        <NodeRow><PinLabel $out><Exec on /></PinLabel></NodeRow>
        <NodeRow><PinLabel $out>Widget Component<Data c={OBJ} on /></PinLabel></NodeRow>
        <NodeRow><PinLabel $out>Previous Widget Component<Data c={OBJ_OFF} /></PinLabel></NodeRow>
      </NodeRows>
    </GraphNode>
    <GraphNode x={716} y={595} w={162} h={63} tone="macro" icon={<b>?</b>} title="Is Valid">
      <NodeRows>
        <NodeRow><PinLabel><Exec on />Exec</PinLabel><PinLabel $out>Is Valid<Exec on /></PinLabel></NodeRow>
        <NodeRow><PinLabel><Data c={OBJ} on />Input Object</PinLabel><PinLabel $out>Is Not Valid<Exec on /></PinLabel></NodeRow>
      </NodeRows>
    </GraphNode>
    <InputNode y={582} title="Enable Input" />
    <InputNode y={706} title="Disable Input" />
    <GraphNode x={860} y={762} w={184} h={44} tone="pure" icon={<FGlyph $size={15} $color="#9be48c">f</FGlyph>} title="Get Player Controller">
      <NodeRows>
        <NodeRow $h={22}>
          <PinLabel as="label"><Data c="#18a878" />Player Index<ValueInput $w={13} defaultValue="0" /></PinLabel>
          <PinLabel $out>Return Value<Data c={OBJ} on /></PinLabel>
        </NodeRow>
      </NodeRows>
    </GraphNode>
    <PrintNode y={595} w={131} value="same" boxW={31} />
    <PrintNode y={719} w={121} value="diff" boxW={22} />
    <GraphTitle>
      <TitleTools $w={27} $pad="0 6px 0 0"><IconButton aria-label="Favourite"><StarIcon /></IconButton></TitleTools>
      <TitleTools $w={87} $pad="0 14px 0 12px">
        <IconButton aria-label="Back"><ArrowIcon dir="l" c="#f1f8f8" /></IconButton>
        <IconButton aria-label="Forward"><ArrowIcon dir="r" c="#8c8c8c" /></IconButton>
      </TitleTools>
      <Crumbs><GraphIcon s={24} />BP_Input<Chevron />Event Graph</Crumbs>
      <ZoomLabel>Zoom -2</ZoomLabel>
    </GraphTitle>
    <Watermark>BLUEPRINT</Watermark>
  </GraphFrame>
);

/* ---------- results ---------- */

const ResultsBody = styled(PanelBody)`
  padding: 6px;
`;

const Log = styled.ul`
  flex: 1;
  margin: 0;
  padding: 4px 10px;
  list-style: none;
  background: #222;
  border-radius: 2px;
  font-family: ${mono};
  color: #8b8b8b;
`;

const LogLine = styled.li`
  display: flex;
  align-items: center;
  gap: 12px;

  &::before {
    content: "";
    width: 4px;
    height: 4px;
    border-radius: 2px;
    background: #6db5ea;
  }
`;

const ClearButton = styled.button`
  align-self: flex-end;
  height: 31px;
  padding: 3px 6px 0;
  text-shadow: 1px 1px 0 #222;
`;

/* ---------- details ---------- */

const DetailsHead = styled.div`
  flex: none;
  display: flex;
  align-items: center;
  height: 26px;
  padding: 2px 3px 0 4px;

  ${IconButton} { margin-left: 4px; }
`;

const MatrixButton = styled.button`
  display: grid;
  place-items: center;
  width: 27px;
  height: 22px;
  margin-left: 8px;
  border: 1px solid #f0f0f0;
  border-radius: 2px;
  background: linear-gradient(#cfcfcf, #a8a8a8);
`;

const DetailsScroll = styled.div`
  position: relative;
  flex: 1;
  min-height: 0;
  padding-left: 2px;
  overflow: hidden;
  font-size: 11px;
`;

const Thumb = styled.div`
  position: absolute;
  top: 2px;
  bottom: 0;
  right: 2px;
  width: 10px;
  background: linear-gradient(#565656, #565656) center / 1px 100% no-repeat;

  &::before {
    content: "";
    display: block;
    height: 71%;
    background: #fff;
    border-radius: 2px;
    box-shadow: 0 0 0 1px #2a2a2a;
  }
`;

const divider = css`
  background-image: linear-gradient(#262626, #262626);
  background-position: 135px 0;
  background-size: 1px 100%;
  background-repeat: no-repeat;
`;

const SectionHead = styled.h2`
  ${divider}
  display: flex;
  align-items: center;
  gap: 4px;
  height: 29px;
  margin: 0;
  padding-left: 3px;
  background-color: #303030;
  border-radius: 3px 0 0 0;
  font-size: 13px;
  color: #e2e2e2;
  text-shadow: 1px 1px 0 #000;
`;

const SectionBody = styled.div<{ $pad: number }>`
  ${divider}
  padding-bottom: ${(p) => p.$pad}px;
`;

const PropRow = styled.div<{ $h: number }>`
  display: grid;
  grid-template-columns: 135px minmax(0, 1fr);
  align-items: center;
  height: ${(p) => p.$h}px;
`;

const PropName = styled.label`
  display: flex;
  align-items: center;
  gap: 4px;
  padding-top: 1px;
  padding-left: 16px;
  overflow: hidden;
  white-space: nowrap;
  color: #c4c4c4;
`;

const PropExpander = styled.svg`
  margin: 0 2px 0 -12px;
`;

const PropValue = styled.div`
  display: flex;
  align-items: center;
  padding-left: 4px;
`;

const TextInput = styled.input<{ $w: number }>`
  width: ${(p) => p.$w}px;
  height: 17px;
  padding: 0 5px;
  border: 0;
  border-radius: 3px;
  background: #dadada;
  color: #222;
`;

const Spin = styled.span<{ $w: number; $pad?: number }>`
  display: flex;
  align-items: center;
  width: ${(p) => p.$w}px;
  height: 17px;
  padding: 0 6px 0 ${(p) => p.$pad ?? 4}px;
  border-radius: 3px;
  background: #dadada;
  color: #222;

  input { flex: 1; min-width: 0; padding: 0; border: 0; background: transparent; }
`;

const Tick = styled.input.attrs({ type: "checkbox" })`
  appearance: none;
  position: relative;
  width: 14px;
  height: 14px;
  margin-left: 1px;
  border-radius: 2px;
  background: #adadad;

  &:checked { background: #dcdcdc; }
  &:checked::after {
    content: "";
    position: absolute;
    left: 5px;
    top: 1px;
    width: 5px;
    height: 9px;
    border: solid #686868;
    border-width: 0 3px 3px 0;
    transform: rotate(42deg);
  }
`;

const ResetButton = styled.button`
  margin-left: 8px;
`;

const Axis = styled.label<{ $c: string }>`
  display: flex;
  align-items: center;
  width: 69px;
  height: 17px;
  margin-right: 2px;
  padding-left: 2px;
  border-radius: 3px;
  background: ${(p) => p.$c};
  color: #fff;
  gap: 2px;
`;

const Segments = styled.div`
  display: flex;
  width: 230px;
  height: 20px;
  border-radius: 6px;
  overflow: hidden;
  background: #595959;
`;

const Segment = styled.label<{ $on?: boolean }>`
  flex: 1;
  display: flex;
  align-items: center;
  justify-content: space-between;
  padding: 0 4px 0 6px;
  overflow: hidden;
  white-space: nowrap;
  background: ${(p) => (p.$on ? "#bb8a0c" : "transparent")};
  color: ${(p) => (p.$on ? "#1c1600" : "#cfcfcf")};

  & + & { border-left: 1px solid #333; }
  input { position: absolute; opacity: 0; width: 1px; height: 1px; }
  span { min-width: 36px; text-align: center; }
`;

const SocketField = styled.input`
  width: 75px;
  height: 21px;
  margin-left: 1px;
  padding: 0 4px;
  border: 0;
  background: #7b7b7b;
  color: #bdbdbd;
`;

const SocketButton = styled.button`
  margin-left: 7px;
`;

const PlainArray = styled.span`
  width: 112px;
  padding-left: 4px;
  color: #cfcfcf;
`;

const ColorButton = styled.button`
  width: 230px;
  height: 12px;
  background: #f00;
`;

const CategorySelect = styled(SelectBox)`
  select { padding-left: 5px; background: linear-gradient(90deg, #fafafa 0 101px, #b4b4b4 101px); border-color: #d0d0d0; box-shadow: 0 0 0 1px #2a2a2a; }
`;

const AdvancedRule = styled.hr`
  height: 11px;
  margin: 0 13px 0 0;
  border: 0;
  background: linear-gradient(#3e3e3e 0 3px, #232323 3px 4px, #363636 5px, #3e3e3e 8px);
`;

const AdvancedToggle = styled.button`
  display: grid;
  place-items: center;
  width: 100%;
  height: 14px;
  padding-right: 17px;
  background: #464646;
  border-top: 1px solid #343434;
`;

const ToggleGlyph = ({ up }: { up?: boolean }) => (
  <svg width="11" height="7" viewBox="0 0 11 7">
    <path d={up ? "M0 5L5.500 0 11 5zM0 6h11v1H0z" : "M0 2L5.500 7 11 2zM0 0h11v1H0z"} fill="#e8e8e8" />
  </svg>
);

const Section = ({ title, pad, children }: { title: string; pad: number; children: React.ReactNode }) => (
  <section>
    <SectionHead><Twisty />{title}</SectionHead>
    <SectionBody $pad={pad}>{children}</SectionBody>
  </section>
);

const slug = (s: string) => s.toLowerCase().replace(/[^a-z]+/g, "-");

const Prop = ({ name, h = 24, children, after, before }: { name: string; h?: number; children: React.ReactNode; after?: React.ReactNode; before?: React.ReactNode }) => (
  <PropRow $h={h}>
    <PropName htmlFor={slug(name)}>{before}{name}{after}</PropName>
    <PropValue>{children}</PropValue>
  </PropRow>
);

const Reset = () => <ResetButton aria-label="Reset to default"><ResetGlyph /></ResetButton>;

const SpinProp = ({ name, value, reset }: { name: string; value: string; reset?: boolean }) => (
  <Prop name={name}><Spin $w={105}><input id={slug(name)} defaultValue={value} /><SpinGlyph /></Spin>{reset && <Reset />}</Prop>
);

const TickProp = ({ name, on, reset, h }: { name: string; on?: boolean; reset?: boolean; h?: number }) => (
  <Prop name={name} h={h}><Tick id={slug(name)} defaultChecked={on} />{reset && <Reset />}</Prop>
);

const SelectProp = ({ name, value, reset }: { name: string; value: string; reset?: boolean }) => (
  <Prop name={name} h={26}>
    <SelectBox $w={105} $h={20}><select id={slug(name)} defaultValue={value}><option>{value}</option></select><Caret c="#111" /></SelectBox>
    {reset && <Reset />}
  </Prop>
);

const Details = () => (
  <Dock>
    <TabStrip $inset={4}><TabItem icon={<InfoIcon />} title="Details" active /></TabStrip>
    <PanelBody>
      <DetailsHead>
        <SearchWrap><input aria-label="Search details" placeholder="Search Details" /><SearchIcon /></SearchWrap>
        <MatrixButton aria-label="Property matrix"><GridIcon /></MatrixButton>
        <IconButton aria-label="Details view options"><EyeIcon /><Caret c="#c4c4c4" /></IconButton>
      </DetailsHead>
      <DetailsScroll>
        <Section title="Variable" pad={12}>
          <Prop name="Variable Name" h={22}><TextInput id="variable-name" $w={125} defaultValue="WidgetInteraction" /></Prop>
          <Prop name="Tooltip" h={22}><TextInput id="tooltip" $w={125} /></Prop>
          <Prop name="Category" h={26}>
            <CategorySelect $w={124} $h={20}><select id="category" defaultValue="Default"><option>Default</option></select><Caret c="#111" /></CategorySelect>
          </Prop>
          <TickProp name="Editable when Inherited" on h={25} />
        </Section>
        <Section title="Transform" pad={13}>
          <Prop name="Scale" after={<Caret c="#c4c4c4" />}>
            {[["X", "#c22b0a"], ["Y", "#6aa80c"], ["Z", "#2f7fe6"]].map(([a, c], i) => (
              <Axis key={a} $c={c}>{a}<Spin $w={58} $pad={8}><input id={i === 0 ? "scale" : undefined} defaultValue="1.0" /><SpinGlyph /></Spin></Axis>
            ))}
            <IconButton aria-label="Lock scale"><LockIcon /></IconButton>
          </Prop>
          <Prop name="Mobility" h={25}>
            <Segments>
              <Segment>
                <input id="mobility" type="radio" name="mobility" />
                <svg width="12" height="12" viewBox="0 0 12 12"><rect x="2.500" y="2" width="8" height="9" rx="3.500" fill="#fff" stroke="#333" /></svg>
                <span>Static</span>
              </Segment>
              <Segment>
                <input type="radio" name="mobility" />
                <svg width="12" height="16" viewBox="0 0 12 16"><path d="M3 1v14M9 1v14" stroke="#fff" /><rect x="1" y="8" width="4" height="4" rx="1" fill="#fff" /><rect x="7" y="4" width="4" height="4" rx="1" fill="#fff" /></svg>
                <span>Stationa</span>
              </Segment>
              <Segment $on>
                <input type="radio" name="mobility" defaultChecked />
                <svg width="14" height="14" viewBox="0 0 14 14"><path d="M7 0l3 3H4zM7 14l3-3H4zM0 7l3-3v6zM14 7l-3-3v6z" fill="#fff" /><rect x="4.500" y="4.500" width="5" height="5" fill="none" stroke="#fff" /></svg>
                <span>Movable</span>
              </Segment>
            </Segments>
          </Prop>
        </Section>
        <Section title="Sockets" pad={13}>
          <Prop name="Parent Socket" h={28}>
            <SocketField id="parent-socket" defaultValue="None" readOnly />
            <SocketButton aria-label="Browse sockets"><SearchIcon c="#b8b8b8" s={12} /></SocketButton>
            <SocketButton aria-label="Clear socket">
              <svg width="20" height="11" viewBox="0 0 20 11"><path d="M6 1l8 9M14 1l-8 9" stroke="#fff" strokeWidth="3" /></svg>
            </SocketButton>
          </Prop>
        </Section>
        <Section title="Interaction" pad={13}>
          <SpinProp name="Virtual User Index" value="0" />
          <SpinProp name="Pointer Index" value="0" />
          <SelectProp name="Trace Channel" value="Visibility" />
          <SpinProp name="Interaction Distance" value="10000.0" reset />
          <SelectProp name="Interaction Source" value="Mouse" reset />
          <TickProp name="Enable Hit Testing" on />
        </Section>
        <Section title="Debugging" pad={2}>
          <TickProp name="Show Debug" on reset />
          <AdvancedRule />
          <SpinProp name="Debug Sphere Line Thic" value="2.0" />
          <SpinProp name="Debug Line Thickness" value="1.0" />
          <Prop name="Debug Color" before={<PropExpander width="6" height="9" viewBox="0 0 6 9"><path d="M.5.5v7.500L5 4.200z" fill="none" stroke="#c4c4c4" /></PropExpander>}>
            <ColorButton id="debug-color" />
          </Prop>
        </Section>
        <AdvancedToggle aria-label="Hide advanced"><ToggleGlyph up /></AdvancedToggle>
        <Section title="Component Tick" pad={2}>
          <TickProp name="Start with Tick Enabled" on />
          <SpinProp name="Tick Interval (secs)" value="0.0" />
        </Section>
        <AdvancedToggle aria-label="Show advanced"><ToggleGlyph /></AdvancedToggle>
        <Section title="Rendering" pad={2}>
          <TickProp name="Visible" on />
          <TickProp name="Hidden in Game" />
        </Section>
        <AdvancedToggle aria-label="Show advanced"><ToggleGlyph /></AdvancedToggle>
        <Section title="Tags" pad={13}>
          <Prop name="Component Tags" h={28}>
            <PlainArray>0 Array elements</PlainArray>
            <IconButton id="component-tags" aria-label="Add tag"><PlusIcon c="#e4e4e4" /></IconButton>
            <SocketButton aria-label="Delete tags"><svg width="19" height="12" viewBox="0 0 19 12"><svg x="6"><TrashIcon /></svg></svg></SocketButton>
          </Prop>
        </Section>
        <Section title="Component Replication" pad={13}>
          <TickProp name="Component Replicates" />
        </Section>
        <Thumb />
      </DetailsScroll>
    </PanelBody>
  </Dock>
);

/* ---------- callouts drawn over the editor ---------- */

const Callout = styled.div<{ $x: number; $y: number; $w: number; $h: number }>`
  position: absolute;
  z-index: 5;
  left: ${(p) => p.$x}px;
  top: ${(p) => p.$y}px;
  width: ${(p) => p.$w}px;
  height: ${(p) => p.$h}px;
  border: 3px solid #f00;
  pointer-events: none;
`;

export default function App() {
  return (
    <Editor>
      <Global />
      <MenuBar>
        <MenuItems>
          {["File", "Edit", "Asset", "View", "Debug", "Window", "Help"].map((m) => <button key={m}>{m}</button>)}
        </MenuItems>
        <ParentClass>Parent class: <a href="#actor">Actor</a></ParentClass>
      </MenuBar>
      <Workspace>
        <LeftColumn />
        <Column>
          <Toolbar />
          <GraphTabs $inset={4}>
            <TabItem icon={<ViewportIcon />} title="Viewport" />
            <TabItem icon={<FGlyph $size={18} $color="#b9c8f2">f</FGlyph>} title="Construction Scrip" />
            <TabItem icon={<GraphIcon />} title="Event Graph" active />
          </GraphTabs>
          <Graph />
          <Dock $height={184}>
            <GraphTabs $inset={4}>
              <TabItem icon={<ScriptIcon />} title="Compiler Results" active />
              <TabItem icon={<LensIcon />} title="Find Results" />
            </GraphTabs>
            <ResultsBody>
              <Log><LogLine>[5206.81] Compile of BP_Input successful! [in 63 ms] (/Game/UI/3DWidget/Lou/BP_Input.BP_Input)</LogLine></Log>
              <ClearButton>Clear</ClearButton>
            </ResultsBody>
          </Dock>
        </Column>
        <Column><Details /></Column>
      </Workspace>
      <Callout $x={452} $y={173} $w={518} $h={337} />
      <Callout $x={367} $y={564} $w={1097} $h={270} />
      <Callout $x={1509} $y={458} $w={301} $h={68} />
    </Editor>
  );
}
